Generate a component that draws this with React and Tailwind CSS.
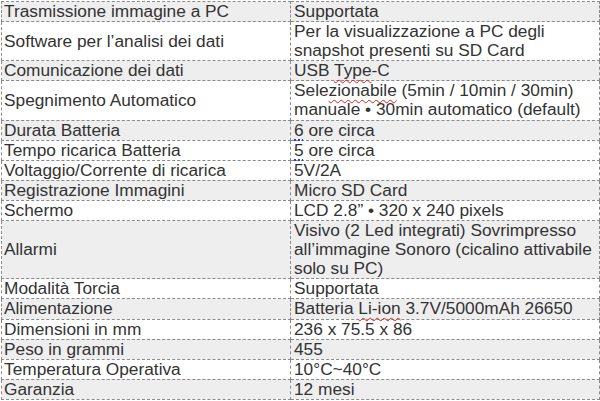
import React from "react";

const red = "underline decoration-wavy decoration-[#e02020] decoration-[1px] underline-offset-[3px] [text-decoration-skip-ink:none]";
const blue = "underline decoration-dotted decoration-[#2040e0] decoration-[2px] underline-offset-[4px] [text-decoration-skip-ink:none]";

const rows = [
  { l: "Trasmissione immagine a PC", r: "Supportata", g: true },
  { l: "Software per l’analisi dei dati", r: <>Per la visualizzazione a PC degli<br />snapshot presenti su SD Card</>, g: false },
  { l: "Comunicazione dei dati", r: <>USB <span className={red}>Type</span>-C</>, g: true },
  { l: "Spegnimento Automatico", r: <>Sele<span className={red}>zionabile</span> (5min / 10min / 30min)<br />manuale • 30min automatico (default)</>, g: false },
  { l: "Durata Batteria", r: <><span className={blue}>6</span> ore circa</>, g: true },
  { l: "Tempo ricarica Batteria", r: <><span className={blue}>5</span> ore circa</>, g: false },
  { l: "Voltaggio/Corrente di ricarica", r: "5V/2A", g: false },
  { l: "Registrazione Immagini", r: "Micro SD Card", g: true },
  { l: "Schermo", r: "LCD 2.8” • 320 x 240 pixels", g: false },
  { l: "Allarmi", r: <>Visivo (2 Led integrati) Sovrimpresso<br />all’immagine Sonoro (cicalino attivabile<br />solo su PC)</>, g: true },
  { l: "Modalità Torcia", r: "Supportata", g: false },
  { l: "Alimentazione", r: <>Batteria <span className={red}>Li-ion</span> 3.7V/5000mAh 26650</>, g: true },
  { l: "Dimensioni in mm", r: "236 x 75.5 x 86", g: false },
  { l: "Peso in grammi", r: "455", g: true },
  { l: "Temperatura Operativa", r: "10°C~40°C", g: false },
  { l: "Garanzia", r: "12 mesi", g: true },
];

export default function App() {
  return (
    <div className="w-[600px] h-[401px] bg-white pl-px pt-px overflow-hidden" style={{ fontFamily: '"Liberation Sans", Arial, sans-serif' }}>
      <table className="w-[598px] table-fixed border-collapse text-[17.3px] leading-[19.1px] text-[#333333]">
        <colgroup>
          <col className="w-[289px]" />
          <col className="w-[309px]" />
        </colgroup>
        <tbody>
          {rows.map((row, i) => (
            <tr key={i} className={row.g ? "bg-[#eeeeee]" : "bg-white"}>
              <td className="border border-dashed border-[#8a8a8a] px-[2px] py-0 align-middle whitespace-nowrap">{row.l}</td>
              <td className="border border-dashed border-[#8a8a8a] px-[3px] py-0 align-middle whitespace-nowrap">{row.r}</td>
            </tr>
          ))}
        </tbody>
      </table>
    </div>
  );
}
